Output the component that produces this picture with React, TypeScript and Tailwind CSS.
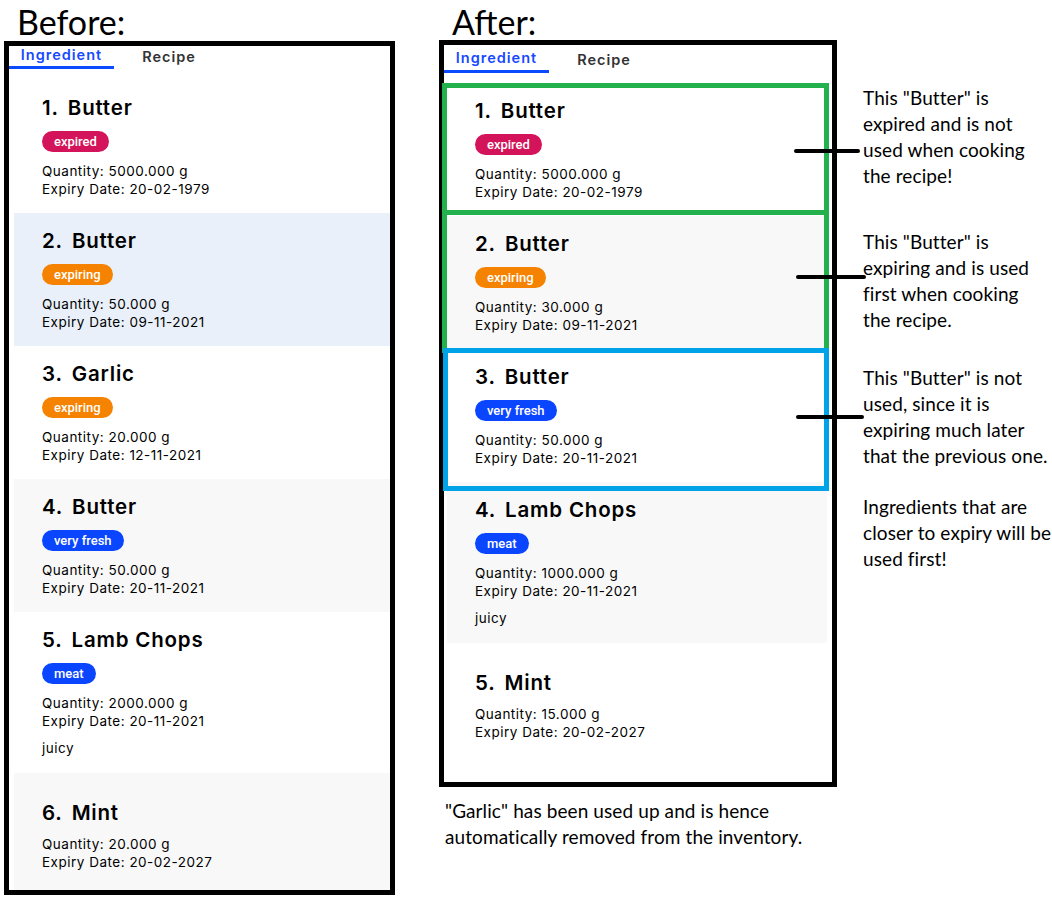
import React from "react";

type Entry = {
  n: number;
  name: string;
  tag?: { label: string; cls: string };
  qty: string;
  exp: string;
  note?: string;
  bg: string;
};

const EXPIRED = { label: "expired", cls: "bg-[#d3145a]" };
const EXPIRING = { label: "expiring", cls: "bg-[#f58300]" };
const FRESH = { label: "very fresh", cls: "bg-[#0a46ff]" };
const MEAT = { label: "meat", cls: "bg-[#0a46ff]" };

const before: Entry[] = [
  { n: 1, name: "Butter", tag: EXPIRED, qty: "5000.000 g", exp: "20-02-1979", bg: "bg-white" },
  { n: 2, name: "Butter", tag: EXPIRING, qty: "50.000 g", exp: "09-11-2021", bg: "bg-[#e9f0f9]" },
  { n: 3, name: "Garlic", tag: EXPIRING, qty: "20.000 g", exp: "12-11-2021", bg: "bg-white" },
  { n: 4, name: "Butter", tag: FRESH, qty: "50.000 g", exp: "20-11-2021", bg: "bg-[#f8f8f8]" },
  { n: 5, name: "Lamb Chops", tag: MEAT, qty: "2000.000 g", exp: "20-11-2021", note: "juicy", bg: "bg-white" },
  { n: 6, name: "Mint", qty: "20.000 g", exp: "20-02-2027", bg: "bg-[#f8f8f8]" },
];

const after: Entry[] = [
  { n: 1, name: "Butter", tag: EXPIRED, qty: "5000.000 g", exp: "20-02-1979", bg: "bg-white" },
  { n: 2, name: "Butter", tag: EXPIRING, qty: "30.000 g", exp: "09-11-2021", bg: "bg-[#f8f8f8]" },
  { n: 3, name: "Butter", tag: FRESH, qty: "50.000 g", exp: "20-11-2021", bg: "bg-white" },
  { n: 4, name: "Lamb Chops", tag: MEAT, qty: "1000.000 g", exp: "20-11-2021", note: "juicy", bg: "bg-[#f8f8f8]" },
  { n: 5, name: "Mint", qty: "15.000 g", exp: "20-02-2027", bg: "bg-white" },
];

function Card({ e }: { e: Entry }) {
  return (
    <div className={`${e.bg} shrink-0 pl-[28px] ${e.tag ? "pt-[16px]" : "pt-[28px]"} ${e.note ? "pb-[16px]" : e.tag ? "pb-[15px]" : "pb-[19px]"}`}>
      <div className="flex h-[24px] items-center gap-[9px] text-[20.5px] font-semibold leading-[24px] tracking-[0.8px] text-black">
        <span>{e.n}.</span>
        <span>{e.name}</span>
      </div>
      {e.tag && (
        <div className="mt-[11px] flex">
          <span className={`${e.tag.cls} h-[21px] rounded-full px-[12px] font-['Roboto',sans-serif] text-[13px] font-medium leading-[21px] text-white`}>
            {e.tag.label}
          </span>
        </div>
      )}
      <div className="mt-[10px] text-[13.5px] leading-[18px] tracking-[0.5px] text-black">
        <div>Quantity: {e.qty}</div>
        <div>Expiry Date: {e.exp}</div>
      </div>
      {e.note && <div className="mt-[9px] text-[13.5px] leading-[18px] tracking-[0.5px] text-black">{e.note}</div>}
    </div>
  );
}

function Tabs({ late }: { late?: boolean }) {
  return (
    <div className={`flex shrink-0 ${late ? "pt-[4px]" : ""}`}>
      <div className="flex w-[105px] flex-col items-center">
        <span className="text-[14.5px] font-semibold leading-[18px] tracking-[1px] text-[#1749ff]">Ingredient</span>
        <span className={`${late ? "mt-[3px]" : "mt-[2px]"} h-[3px] w-full bg-[#0a4bff]`} />
      </div>
      <div className="flex w-[110px] justify-center pt-[2px]">
        <span className="text-[14.5px] font-semibold leading-[18px] tracking-[1px] text-[#333333]">Recipe</span>
      </div>
    </div>
  );
}

const note = "font-['Lato','Open_Sans',sans-serif] text-[19px] leading-[26px] tracking-[0.1px] text-black whitespace-nowrap";

export default function App() {
  return (
    <div className="relative flex h-[899px] w-[1052px] overflow-hidden bg-white font-['Inter','Noto_Sans',sans-serif]">
      {/* before */}
      <div className="ml-[4px] flex w-[391px] shrink-0 flex-col">
        <div className="h-[41px] pl-[13px] font-['Lato',sans-serif] text-[34px] leading-[44px] text-black">Before:</div>
        <div className="flex h-[854px] flex-col overflow-hidden border-[5px] border-black">
          <Tabs />
          <div className="mt-[11px] flex flex-col pl-[5px]">
            {before.map((e) => (
              <Card key={e.n} e={e} />
            ))}
          </div>
        </div>
      </div>

      {/* after */}
      <div className="ml-[44px] flex w-[398px] shrink-0 flex-col">
        <div className="h-[40px] pl-[13px] font-['Lato',sans-serif] text-[34px] leading-[44px] text-black">After:</div>
        <div className="flex h-[747px] flex-col overflow-hidden border-[5px] border-black">
          <Tabs late />
          <div className="mt-[10px] flex flex-col pl-[3px] pr-[5px]">
            {after.map((e) => (
              <Card key={e.n} e={e} />
            ))}
          </div>
        </div>
        <div className={`mt-[11px] pl-[6px] ${note}`}>
          <div>"Garlic" has been used up and is hence</div>
          <div>automatically removed from the inventory.</div>
        </div>
      </div>

      {/* notes */}
      <div className="ml-[26px] flex flex-col pt-[85px]">
        <div className={note}>
          <div>This "Butter" is</div>
          <div>expired and is not</div>
          <div>used when cooking</div>
          <div>the recipe!</div>
        </div>
        <div className={`mt-[40px] ${note}`}>
          <div>This "Butter" is</div>
          <div>expiring and is used</div>
          <div>first when cooking</div>
          <div>the recipe.</div>
        </div>
        <div className={`mt-[32px] ${note}`}>
          <div>This "Butter" is not</div>
          <div>used, since it is</div>
          <div>expiring much later</div>
          <div>that the previous one.</div>
        </div>
        <div className={`mt-[25px] ${note}`}>
          <div>Ingredients that are</div>
          <div>closer to expiry will be</div>
          <div>used first!</div>
        </div>
      </div>

      {/* highlight boxes */}
      <div className="pointer-events-none absolute left-[442px] top-[83px] h-[132px] w-[387px] border-[5px] border-[#22b14c]" />
      <div className="pointer-events-none absolute left-[442px] top-[210px] h-[143px] w-[387px] border-[5px] border-[#22b14c]" />
      <div className="pointer-events-none absolute left-[443px] top-[348px] h-[143px] w-[386px] border-[5px] border-[#00a2e8]" />

      <svg className="pointer-events-none absolute left-0 top-0" width="1052" height="899">
        <g stroke="#000" strokeWidth="4" strokeLinecap="round">
          <line x1="796" y1="151" x2="858" y2="151" />
          <line x1="798" y1="277" x2="864" y2="277" />
          <line x1="798" y1="417" x2="862" y2="417" />
        </g>
      </svg>
    </div>
  );
}
